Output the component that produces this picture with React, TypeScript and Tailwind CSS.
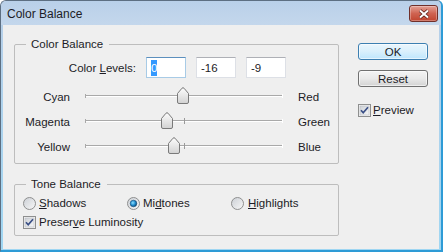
import { ReactNode } from "react";

type SliderRow = { left: string; right: string; value: number };

const sliders: SliderRow[] = [
  { left: "Cyan", right: "Red", value: 0 },
  { left: "Magenta", right: "Green", value: -16 },
  { left: "Yellow", right: "Blue", value: -9 },
];

const Thumb = () => (
  <svg width="12" height="17" viewBox="0 0 12 17">
    <defs>
      <linearGradient id="thumbFill" x1="0" y1="0" x2="0" y2="1">
        <stop offset="0" stopColor="#fdfdfd" />
        <stop offset="1" stopColor="#d2d2d2" />
      </linearGradient>
    </defs>
    <path
      d="M0.5 15 V6.5 L5 1.2 Q6 0.2 7 1.2 L11.5 6.5 V15 Q11.5 16.5 10 16.5 H2 Q0.5 16.5 0.5 15 Z"
      fill="url(#thumbFill)"
      stroke="#7a7a7a"
    />
  </svg>
);

const Track = () => (
  <svg width="198" height="9" viewBox="0 0 198 9" className="block">
    <line x1="0" y1="3.5" x2="198" y2="3.5" stroke="#a9a9a9" />
    <line x1="1" y1="4.5" x2="198" y2="4.5" stroke="#ffffff" />
    <line x1="0.5" y1="2" x2="0.5" y2="6" stroke="#a9a9a9" />
    <line x1="197.5" y1="2" x2="197.5" y2="6" stroke="#ffffff" />
    <line x1="99.5" y1="1" x2="99.5" y2="7" stroke="#9a9a9a" />
  </svg>
);

const Slider = ({ left, right, value }: SliderRow) => (
  <div className="flex h-[25px] items-start">
    <div className="w-[55px] pt-[6px] text-right">{left}</div>
    <div className="relative ml-[15px] h-full w-[198px]">
      <div className="pt-[8px]">
        <Track />
      </div>
      <div className="absolute top-[3px]" style={{ left: 98 + value - 6 }}>
        <Thumb />
      </div>
    </div>
    <div className="ml-[15px] pt-[6px]">{right}</div>
  </div>
);

const CheckBox = () => (
  <svg width="13" height="13" viewBox="0 0 13 13" className="shrink-0">
    <defs>
      <linearGradient id="cbFill" x1="0" y1="0" x2="1" y2="1">
        <stop offset="0" stopColor="#cdd1d6" />
        <stop offset="1" stopColor="#f7f7f7" />
      </linearGradient>
    </defs>
    <rect x="0.5" y="0.5" width="12" height="12" fill="#f4f4f4" stroke="#8e8f8f" />
    <rect x="2" y="2" width="9" height="9" fill="url(#cbFill)" stroke="#b9bcc2" strokeWidth="0.6" />
    <path d="M3 6.3 L5.2 8.8 L10 3.2" fill="none" stroke="#3a4f86" strokeWidth="1.7" />
  </svg>
);

const Radio = ({ checked }: { checked?: boolean }) => (
  <svg width="13" height="13" viewBox="0 0 13 13" className="shrink-0">
    <defs>
      <linearGradient id="rdFill" x1="0" y1="0" x2="1" y2="1">
        <stop offset="0" stopColor="#cbcfd5" />
        <stop offset="1" stopColor="#f8f8f8" />
      </linearGradient>
      <radialGradient id="rdDot" cx="0.4" cy="0.4" r="0.6">
        <stop offset="0" stopColor="#8fe0ff" />
        <stop offset="0.6" stopColor="#1f8ccf" />
        <stop offset="1" stopColor="#0b4c7c" />
      </radialGradient>
    </defs>
    <circle cx="6.5" cy="6.5" r="6" fill="url(#rdFill)" stroke="#8e8f8f" />
    {checked && <circle cx="6.5" cy="6.5" r="3.3" fill="url(#rdDot)" stroke="#1a4f78" strokeWidth="0.6" />}
  </svg>
);

const GroupBox = ({ title, className, children }: { title: string; className?: string; children: ReactNode }) => (
  <fieldset className={`rounded-[2px] border border-[#bdbdbd] ${className ?? ""}`}>
    <legend className="ml-[11px] pl-[5px] pr-[6px] leading-[14px]">{title}</legend>
    {children}
  </fieldset>
);

const LevelBox = ({ children, focused }: { children: ReactNode; focused?: boolean }) => (
  <div
    className={`flex h-[21px] w-[40px] items-center border bg-white pl-[4px] ${
      focused
        ? "border-[#a8cbe6] border-t-[#5c8fbd]"
        : "border-[#dde0e6] border-t-[#aeb0b6]"
    }`}
  >
    {children}
  </div>
);

export default function App() {
  return (
    <div className="flex h-[252px] w-[443px] flex-col overflow-hidden rounded-t-[6px] border-t border-l border-[#5d6f82] border-r-2 border-b-2 border-r-[#2e9bd6] border-b-[#2e9bd6] bg-gradient-to-b from-[#b8cfe8] to-[#9fd6f2] font-['Liberation_Sans',Arial,sans-serif] text-[11.5px] leading-[14px] text-[#1c1c26]">
      {/* title bar */}
      <div className="flex h-[24px] items-start bg-gradient-to-b from-[#b9d0e9] to-[#c4d7ec] pl-[6px] pr-[3px]">
        <div className="mt-[6px] text-[12px]">Color Balance</div>
        <div className="mt-[4px] ml-auto flex h-[17px] w-[29px] items-center justify-center rounded-[3px] border border-[#70302a] bg-gradient-to-b from-[#e3a196] via-[#cf6351] to-[#c0442f] shadow-[inset_0_0_0_1px_rgba(255,255,255,0.3)]">
          <svg width="12" height="10" viewBox="0 0 12 10">
            <path d="M2 1.5 L10 8.5 M10 1.5 L2 8.5" stroke="#5a1f18" strokeWidth="3.6" />
            <path d="M2 1.5 L10 8.5 M10 1.5 L2 8.5" stroke="#ffffff" strokeWidth="2" />
          </svg>
        </div>
      </div>

      {/* body */}
      <div className="mr-[2px] mb-[1px] ml-[2px] flex flex-1 gap-[19px] bg-[#efefef] pt-[12px] pl-[11px]">
        <div className="flex w-[325px] flex-col">
          <GroupBox title="Color Balance" className="pb-[4px]">
            <div className="mt-[6px] flex h-[21px] items-center">
              <div className="w-[121px] text-right">
                Color <u>L</u>evels:
              </div>
              <div className="ml-[10px] flex gap-[10px]">
                <LevelBox focused>
                  <span className="bg-[#3399ff] leading-[16px] text-white">0</span>
                </LevelBox>
                <LevelBox>-16</LevelBox>
                <LevelBox>-9</LevelBox>
              </div>
            </div>
            <div className="mt-[6px]">
              {sliders.map((s) => (
                <Slider key={s.left} {...s} />
              ))}
            </div>
          </GroupBox>

          <GroupBox title="Tone Balance" className="mt-[13px] pb-[5px]">
            <div className="mt-[4px] flex h-[16px] pl-[8px]">
              <div className="flex w-[104px] items-center gap-[3px]">
                <Radio />
                <span>
                  <u>S</u>hadows
                </span>
              </div>
              <div className="flex w-[104px] items-center gap-[3px]">
                <Radio checked />
                <span>
                  Mi<u>d</u>tones
                </span>
              </div>
              <div className="flex items-center gap-[4px]">
                <Radio />
                <span>
                  <u>H</u>ighlights
                </span>
              </div>
            </div>
            <div className="mt-[3px] flex h-[16px] items-center gap-[3px] pl-[8px]">
              <CheckBox />
              <span>
                Preser<u>v</u>e Luminosity
              </span>
            </div>
          </GroupBox>
        </div>

        <div className="flex w-[70px] flex-col pt-[6px]">
          <button className="flex h-[17px] items-center justify-center rounded-[3px] border border-[#3c7fb1] bg-gradient-to-b from-[#eaf6fd] via-[#d9f0fc] to-[#bee6fd] shadow-[inset_0_0_0_1px_rgba(255,255,255,0.6)]">
            OK
          </button>
          <button className="mt-[10px] flex h-[17px] items-center justify-center rounded-[3px] border border-[#707070] bg-gradient-to-b from-[#f4f4f4] via-[#e9e9e9] to-[#d3d3d3] shadow-[inset_0_0_0_1px_rgba(255,255,255,0.6)]">
            Reset
          </button>
          <div className="mt-[16px] flex items-center gap-[2px]">
            <CheckBox />
            <span>
              <u>P</u>review
            </span>
          </div>
        </div>
      </div>
    </div>
  );
}
